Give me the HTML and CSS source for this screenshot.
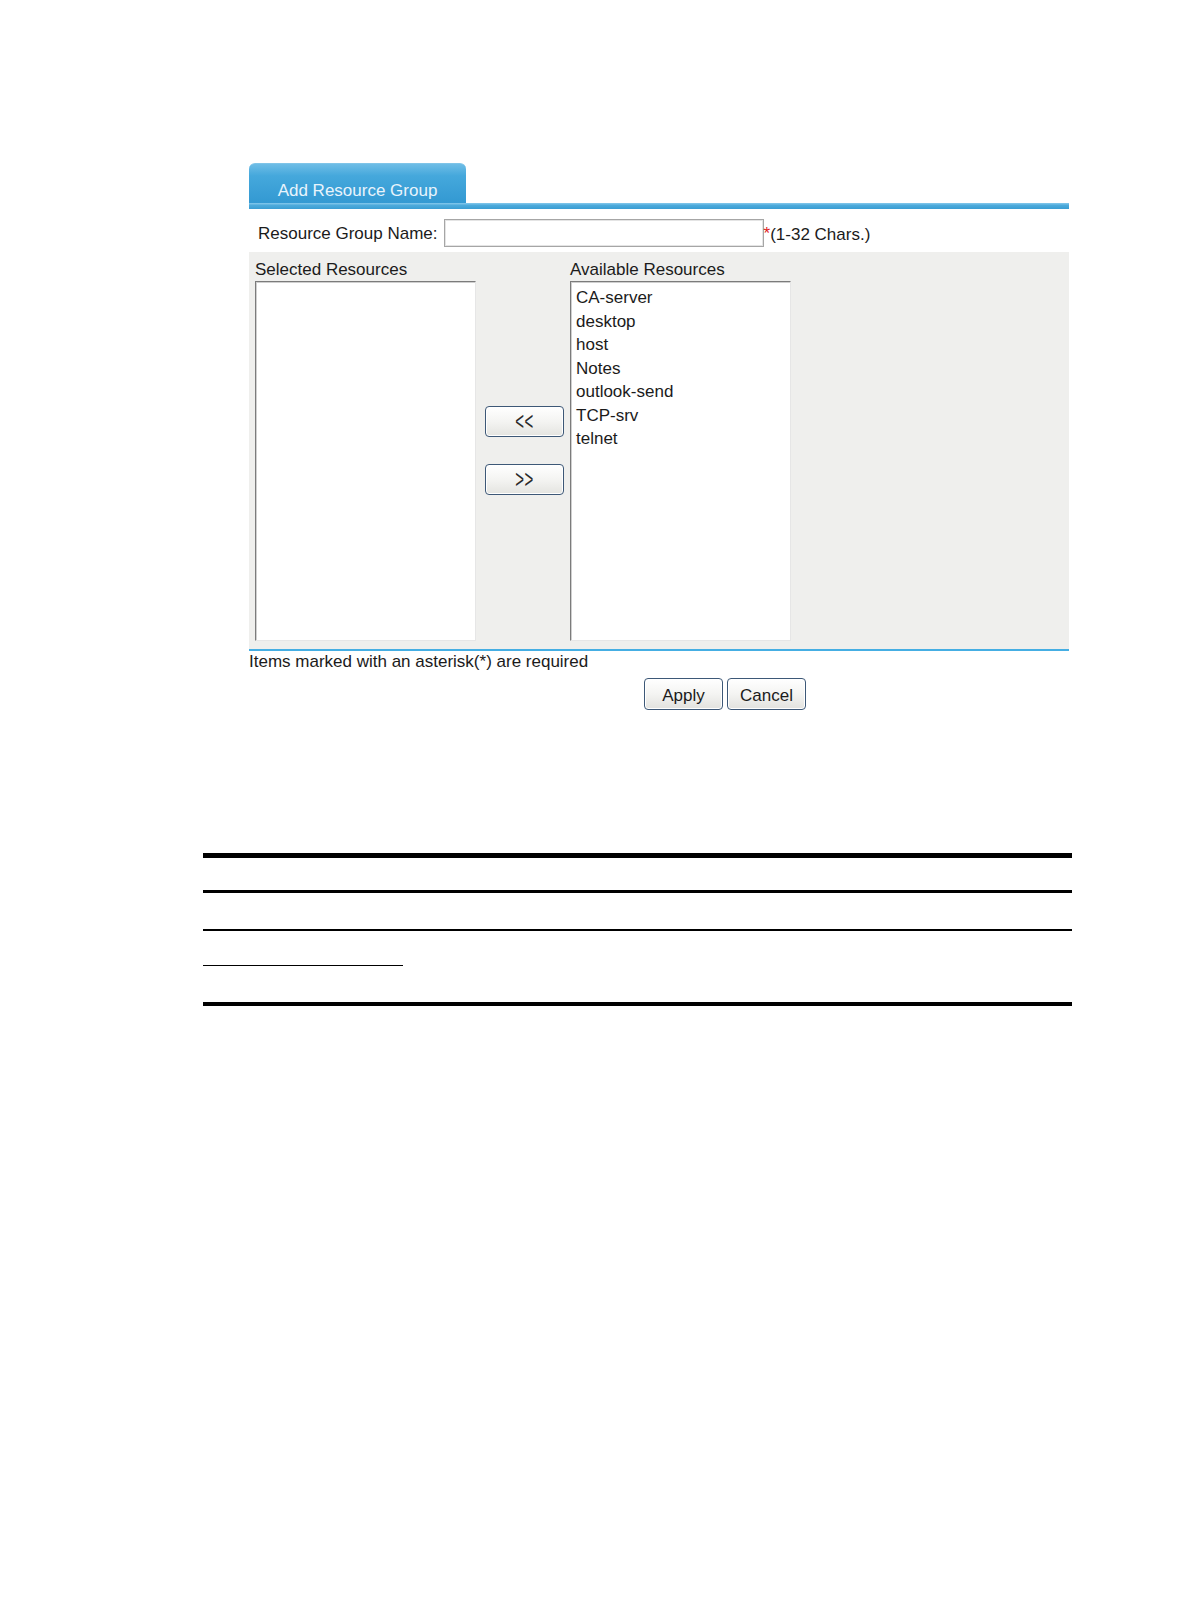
FILE: index.html
```html
<!DOCTYPE html>
<html lang="en">
<head>
<meta charset="utf-8">
<title>Add Resource Group</title>
<link rel="stylesheet" href="styles.css">
</head>
<body>
<div class="page">
  <div class="figure">
    <div class="tabbar">
      <div class="tab">Add Resource Group</div>
    </div>
    <div class="tabline"></div>
    <div class="name-row">
      <label class="name-label" for="rgname">Resource Group Name:</label>
      <input id="rgname" class="name-input" type="text">
      <span class="req">*</span><span class="hint">(1-32 Chars.)</span>
    </div>
    <div class="panel">
      <div class="col">
        <div class="col-title">Selected Resources</div>
        <ul class="listbox"></ul>
      </div>
      <div class="movers">
        <button class="mover" type="button"><span class="chev">&lt;&lt;</span></button>
        <button class="mover" type="button"><span class="chev">&gt;&gt;</span></button>
      </div>
      <div class="col">
        <div class="col-title">Available Resources</div>
        <ul class="listbox">
          <li>CA-server</li>
          <li>desktop</li>
          <li>host</li>
          <li>Notes</li>
          <li>outlook-send</li>
          <li>TCP-srv</li>
          <li>telnet</li>
        </ul>
      </div>
    </div>
    <div class="note">Items marked with an asterisk(*) are required</div>
    <div class="actions">
      <button class="btn" type="button">Apply</button>
      <button class="btn" type="button">Cancel</button>
    </div>
  </div>

  <div class="doc-table">
    <div class="rule rule-thick"></div>
    <div class="trow trow-head"></div>
    <div class="rule rule-mid"></div>
    <div class="trow trow-body"></div>
    <div class="rule rule-thin"></div>
    <div class="trow trow-short"></div>
    <div class="rule rule-short"></div>
    <div class="trow trow-last"></div>
    <div class="rule rule-bottom"></div>
  </div>
</div>
</body>
</html>
```

FILE: styles.css
```css
html, body {
  margin: 0;
  padding: 0;
  background: #ffffff;
}

body {
  font-family: "Liberation Sans", Arial, sans-serif;
  font-size: 17px;
  line-height: 20px;
  color: #1b1b1b;
}

.page {
  width: 1190px;
  padding-top: 163px;
}

.figure {
  margin-left: 249px;
  width: 820px;
}

/* tab header */
.tabbar {
  display: flex;
  height: 40px;
}

.tab {
  box-sizing: border-box;
  width: 217px;
  height: 40px;
  padding-top: 17px;
  text-align: center;
  color: #e8f4fc;
  border-radius: 6px 6px 0 0;
  border-top: 1px solid #7fc4e8;
  background: linear-gradient(to bottom, #6ebde6 0%, #45a8dc 30%, #3399d2 100%);
}

.tabline {
  height: 6px;
  background: linear-gradient(to bottom, #86c9ec 0%, #4caadb 40%, #3a9dd3 100%);
}

/* name row */
.name-row {
  display: flex;
  align-items: center;
  padding: 10px 0 5px 9px;
}

.name-label {
  padding-top: 2px;
  margin-right: 6px;
}

.name-input {
  box-sizing: border-box;
  width: 320px;
  height: 28px;
  margin: 0;
  padding: 0 4px;
  border: 1px solid #a6a6a6;
  box-shadow: inset 0 0 0 1px #e4e4e4;
  background: #ffffff;
  font: inherit;
}

.req {
  color: #e0201b;
  padding-top: 2px;
}

.hint {
  padding-top: 3px;
}

/* grey panel with the two lists */
.panel {
  display: flex;
  align-items: flex-start;
  padding: 8px 0 8px 6px;
  background: #efefed;
  border-bottom: 2px solid #45aee3;
}

.col {
  display: flex;
  flex-direction: column;
  gap: 1px;
  width: 221px;
}

.col-title {
  height: 20px;
}

.listbox {
  box-sizing: border-box;
  height: 360px;
  margin: 0;
  padding: 4px 0 0 5px;
  list-style: none;
  background: #ffffff;
  border: 1px solid;
  border-color: #7b7b7b #e6e6e6 #e6e6e6 #7b7b7b;
  box-shadow: inset 1px 1px 0 #cfcfcf;
  line-height: 23.5px;
}

.movers {
  display: flex;
  flex-direction: column;
  gap: 27px;
  margin: 146px 6px 0 9px;
}

.mover {
  box-sizing: border-box;
  width: 79px;
  height: 31px;
  margin: 0;
  padding: 0;
  border: 1px solid #3d5877;
  border-radius: 4px;
  box-shadow: inset 0 0 0 1px #ffffff;
  background: linear-gradient(to bottom, #ffffff 0%, #f4f4f2 50%, #e4e4e0 100%);
  font-family: "Liberation Sans", Arial, sans-serif;
  color: #2a2a2a;
}

.chev {
  display: inline-block;
  font-size: 25px;
  line-height: 22px;
  letter-spacing: 1px;
  transform: scaleX(0.6);
}

/* footer */
.note {
  margin-top: 1px;
  height: 20px;
}

.actions {
  display: flex;
  gap: 4px;
  margin: 6px 0 0 395px;
}

.btn {
  box-sizing: border-box;
  width: 79px;
  height: 32px;
  margin: 0;
  padding: 3px 0 0;
  border: 1px solid #3d5877;
  border-radius: 4px;
  box-shadow: inset 0 0 0 1px #ffffff;
  background: linear-gradient(to bottom, #ffffff 0%, #f4f4f2 50%, #e2e2de 100%);
  font-family: "Liberation Sans", Arial, sans-serif;
  font-size: 17px;
  color: #1b1b1b;
}

/* empty document table below the figure */
.doc-table {
  margin: 143px 0 0 203px;
  width: 869px;
}

.rule {
  background: #000000;
}

.rule-thick { height: 5px; }
.rule-mid { height: 3px; }
.rule-thin { height: 1.5px; }
.rule-short { height: 1.5px; width: 200px; }
.rule-bottom { height: 4px; }

.trow-head { height: 32px; }
.trow-body { height: 36px; }
.trow-short { height: 34px; }
.trow-last { height: 36px; }
```
